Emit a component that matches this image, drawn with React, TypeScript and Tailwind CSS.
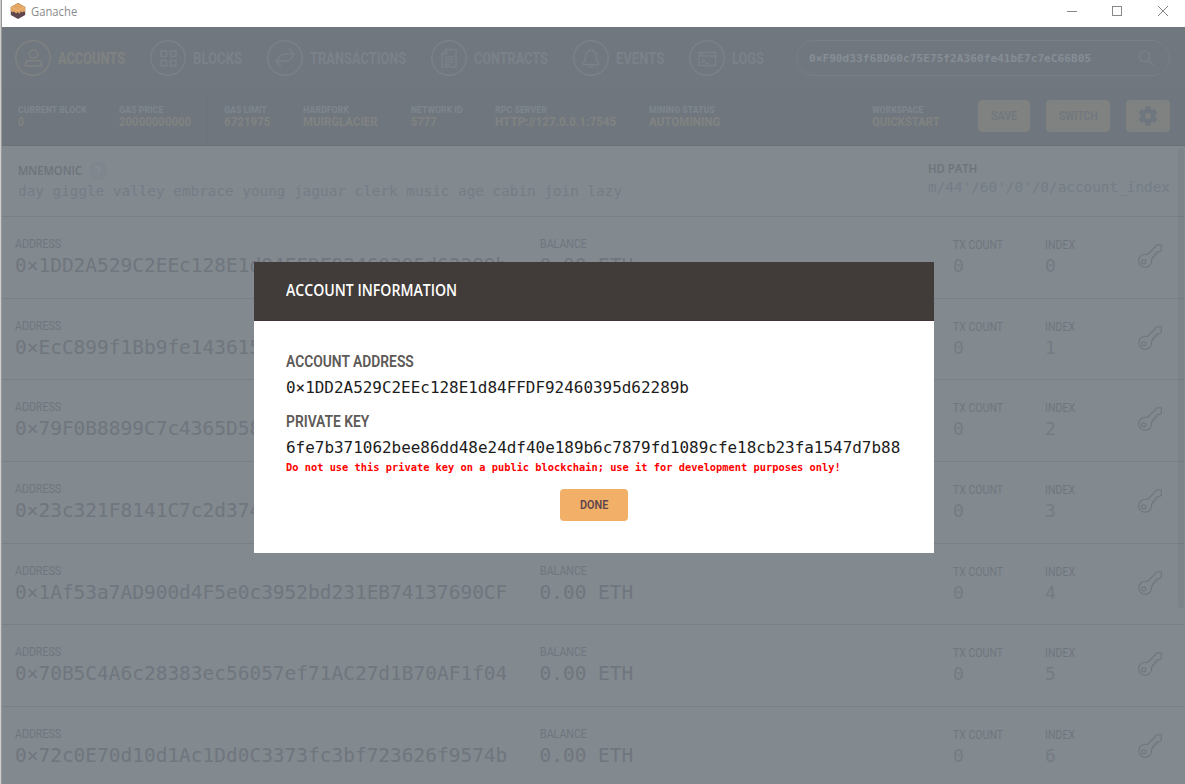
import React, { useLayoutEffect, useRef } from 'react';

const SANS = "font-['Roboto','Liberation_Sans',sans-serif]";
const MONO = "font-['DejaVu_Sans_Mono','Liberation_Mono',monospace]";

// Condenses a single line of text so that it fills the width of its box
const Fit: React.FC<{ className: string; children: string }> = ({ className, children }) => {
  const ref = useRef<HTMLSpanElement>(null);

  useLayoutEffect(() => {
    const el = ref.current;
    if (!el || !el.parentElement) return;
    el.style.transform = `scaleX(${el.parentElement.clientWidth / el.offsetWidth})`;
  }, []);

  return (
    <div className={`shrink-0 whitespace-nowrap ${className}`}>
      <span ref={ref} className="inline-block origin-left">{children}</span>
    </div>
  );
};

const navItems = [
  {
    label: 'ACCOUNTS',
    width: 'w-[67px]',
    color: 'text-[#7f8280]',
    icon: (
      <>
        <circle cx="18.5" cy="14" r="4.3" />
        <path d="M10.5 26v-2c0-2 1.5-3.3 4-3.3h8c2.5 0 4 1.3 4 3.3v2z" />
      </>
    ),
  },
  {
    label: 'BLOCKS',
    width: 'w-[49px]',
    color: 'text-[#7a8189]',
    icon: <path d="M11 11h5.5v5.5H11zM20.5 11H26v5.5h-5.5zM11 20.5h5.5V26H11zM20.5 20.5H26V26h-5.5z" />,
  },
  {
    label: 'TRANSACTIONS',
    width: 'w-[96px]',
    color: 'text-[#7a8189]',
    icon: <path d="M21.7 8L27 14l-4 6.5M27 14H15.500L9 21h13.500M9 21l5 6" />,
  },
  {
    label: 'CONTRACTS',
    width: 'w-[74px]',
    color: 'text-[#7a8189]',
    icon: (
      <>
        <path d="M15.5 9.5H25V27H11V14z" />
        <path d="M15.5 9.5V14H11M13.5 17h9M13.5 19.5h9M13.5 22h9M13.5 24.5h6" />
      </>
    ),
  },
  {
    label: 'EVENTS',
    width: 'w-[48px]',
    color: 'text-[#7a8189]',
    icon: (
      <>
        <path d="M11 24.5c-1.2 0-1.2-1.2-.4-2 1.7-1.6 1.9-3 1.9-5.5 0-3.2 1.3-5 3.7-5.7.3-2.4 3.3-2.4 3.6 0 2.4.7 3.7 2.5 3.7 5.7 0 2.5.2 3.9 1.9 5.5.8.8.8 2-.4 2z" />
        <path d="M15.8 25c.3 2.7 4.1 2.7 4.4 0" />
      </>
    ),
  },
  {
    label: 'LOGS',
    width: 'w-[32px]',
    color: 'text-[#7a8189]',
    icon: <path d="M10 12.5h16.5v13H10zM10 16h16.5M13 12.5V16M12.5 18.5l3 2.2-3 2.2M16 23.3h4" />,
  },
];

const statusItems = [
  { label: 'CURRENT BLOCK', value: '0', cell: 'w-[101px] border-[#6d747c]', lw: 'w-[69px]', vw: 'w-[6px]' },
  { label: 'GAS PRICE', value: '20000000000', cell: 'w-[105px] border-[#6d747c]', lw: 'w-[44px]', vw: 'w-[72px]' },
  { label: 'GAS LIMIT', value: '6721975', cell: 'w-[79px] border-[#6d747c]', lw: 'w-[43px]', vw: 'w-[46px]' },
  { label: 'HARDFORK', value: 'MUIRGLACIER', cell: 'w-[107.5px] border-[#6d747c]', lw: 'w-[46px]', vw: 'w-[75px]' },
  { label: 'NETWORK ID', value: '5777', cell: 'w-[84.5px] border-transparent', lw: 'w-[52px]', vw: 'w-[26px]' },
  { label: 'RPC SERVER', value: 'HTTP://127.0.0.1:7545', cell: 'w-[154px] border-transparent', lw: 'w-[52px]', vw: 'w-[121px]' },
  { label: 'MINING STATUS', value: 'AUTOMINING', cell: 'w-[222px] border-transparent', lw: 'w-[66px]', vw: 'w-[71px]' },
];

const accounts = [
  '0×1DD2A529C2EEc128E1d84FFDF92460395d62289b',
  '0×EcC899f1Bb9fe143615',
  '0×79F0B8899C7c4365D58',
  '0×23c321F8141C7c2d374',
  '0×1Af53a7AD900d4F5e0c3952bd231EB74137690CF',
  '0×70B5C4A6c28383ec56057ef71AC27d1B70AF1f04',
  '0×72c0E70d10d1Ac1Dd0C3373fc3bf723626f9574b',
];

const Logo = () => (
  <svg className="h-4 w-4" viewBox="0 0 16 16">
    <path d="M8 0l7.2 4v8L8 16 .8 12V4z" fill="#5e464d" />
    <path d="M8 0l7.2 4v5l-1.5-.5-1.5 1-1.5-1L9.5 11 8 9l-2 1.5L4 8.5l-1.5.8L.8 8V4z" fill="#e4a663" />
    <path d="M2 4.3l6 3.2 6-3.2" fill="none" stroke="#f3c48e" strokeWidth=".6" />
  </svg>
);

const TitleBar = () => (
  <div className="flex h-[27px] shrink-0 items-start bg-white pl-2">
    <div className="mt-[3px]"><Logo /></div>
    <Fit className="ml-[5px] mt-[3px] w-[46px] font-['Open_Sans','Noto_Sans',sans-serif] text-xs leading-[17px] text-[#8c8c8c]">Ganache</Fit>
    <svg className="ml-auto mr-[15px] mt-[5px]" width="104" height="12" viewBox="0 0 104 12" fill="none" stroke="#888">
      <path d="M1 6.5h10" shapeRendering="crispEdges" />
      <path d="M46.5 1.5h9v9h-9z" shapeRendering="crispEdges" />
      <path d="M92 1l10 10M102 1L92 11" />
    </svg>
  </div>
);

const NavBar = () => (
  <div className="flex h-[62px] items-center border-b border-[#6e757d] pl-[13px] pr-[15px]">
    <div className="flex gap-[25px]">
      {navItems.map((item) => (
        <div key={item.label} className={`flex items-center gap-[7px] ${item.color}`}>
          <svg className="h-9 w-9 shrink-0" viewBox="0 0 36 36" fill="none" stroke="currentColor" strokeWidth="1.5">
            <circle cx="18" cy="18" r="17.2" />
            {item.icon}
          </svg>
          <Fit className={`pt-0.5 text-base font-extrabold leading-5 ${item.width}`}>{item.label}</Fit>
        </div>
      ))}
    </div>
    <div className="ml-auto flex h-9 w-[374px] items-center justify-between rounded-full border border-[#788087] pl-3 pr-[15px]">
      <Fit className={`w-[282px] pt-0.5 text-[11px] font-bold leading-4 text-[#868e96] ${MONO}`}>
        0×F90d33f68D60c75E75f2A360fe41bE7c7eC66B05
      </Fit>
      <svg className="h-4 w-4" viewBox="0 0 16 16" fill="none" stroke="#798188" strokeWidth="1.6">
        <circle cx="6.5" cy="6.5" r="5.3" />
        <path d="M10.5 10.5l5 4.5" />
      </svg>
    </div>
  </div>
);

const StatusBar = () => (
  <div className="flex h-[57px] border-b border-[#697179] bg-[#6f767e]">
    {statusItems.map((item) => (
      <div key={item.label} className={`shrink-0 border-r pl-4 pt-4 ${item.cell}`}>
        <Fit className={`text-[9px] font-extrabold leading-[11px] text-[#7d858d] ${item.lw}`}>{item.label}</Fit>
        <Fit className={`text-xs font-extrabold leading-[13px] text-[#7f8280] ${item.vw}`}>{item.value}</Fit>
      </div>
    ))}
    <div className="ml-auto flex pr-[15px] pt-[11px]">
      <div className="w-[106px] pt-[5px]">
        <Fit className="w-[51px] text-[9px] font-extrabold leading-[11px] text-[#7d858d]">WORKSPACE</Fit>
        <Fit className="w-[68px] text-xs font-extrabold leading-[13px] text-[#7f8280]">QUICKSTART</Fit>
      </div>
      <div className="flex gap-4 text-xs font-medium text-[#70777e]">
        <button className="flex h-8 w-[52px] items-center justify-center rounded-sm bg-[#7f8280]"><Fit className="w-[26px] text-left">SAVE</Fit></button>
        <button className="flex h-8 w-16 items-center justify-center rounded-sm bg-[#7f8280]"><Fit className="w-[39px] text-left">SWITCH</Fit></button>
        <button className="flex h-8 w-11 items-center justify-center rounded-sm bg-[#7f8280]">
          <svg className="h-[22px] w-[22px]" viewBox="0 0 24 24" fill="#6e767e" stroke="#6e767e" strokeWidth=".6" strokeLinejoin="round">
            <path d="M19.43 12.98c.04-.32.07-.64.07-.98s-.03-.66-.07-.98l2.11-1.65c.19-.15.24-.42.12-.64l-2-3.46c-.12-.22-.39-.3-.61-.22l-2.49 1c-.52-.4-1.08-.73-1.69-.98l-.38-2.65C14.46 2.18 14.25 2 14 2h-4c-.25 0-.46.18-.49.42l-.38 2.65c-.61.25-1.17.59-1.69.98l-2.49-1c-.23-.09-.49 0-.61.22l-2 3.46c-.13.22-.07.49.12.64l2.11 1.65c-.04.32-.07.65-.07.98s.03.66.07.98l-2.11 1.65c-.19.15-.24.42-.12.64l2 3.46c.12.22.39.3.61.22l2.49-1c.52.4 1.08.73 1.69.98l.38 2.65c.03.24.24.42.49.42h4c.25 0 .46-.18.49-.42l.38-2.65c.61-.25 1.17-.59 1.69-.98l2.49 1c.23.09.49 0 .61-.22l2-3.46c.12-.22.07-.49-.12-.64zM12 15.5a3.5 3.5 0 1 1 0-7 3.5 3.5 0 0 1 0 7z" />
          </svg>
        </button>
      </div>
    </div>
  </div>
);

const MnemonicPanel = () => (
  <div className="flex h-[71px] shrink-0 justify-between border-b border-[#787f86] pl-4 pr-[15px]">
    <div className="pt-4">
      <div className="flex h-[18px] items-start gap-2">
        <Fit className="w-16 font-['Open_Sans',sans-serif] text-[13px] font-semibold leading-4 text-[#6d747b]">MNEMONIC</Fit>
        <span className="flex h-[18px] w-4 items-center justify-center rounded-md bg-[#7f868d] text-xs font-bold text-[#858c94]">?</span>
      </div>
      <Fit className={`w-[604px] text-[14px] leading-[22px] text-[#747d86] ${MONO}`}>
        day giggle valley embrace young jaguar clerk music age cabin join lazy
      </Fit>
    </div>
    <div className="pt-[13px]">
      <Fit className="w-[49px] font-['Open_Sans',sans-serif] text-[13px] font-semibold leading-[18px] text-[#6d747b]">HD PATH</Fit>
      <Fit className={`w-[242px] text-[14px] leading-5 text-[#747d86] ${MONO}`}>{"m/44'/60'/0'/0/account_index"}</Fit>
    </div>
  </div>
);

const AccountRow: React.FC<{ address: string; index: number }> = ({ address, index }) => (
  <div className="flex h-[81.67px] shrink-0 border-b border-[#787f86] pl-[13px] pt-5 text-[#70767e]">
    <div className="w-[524.5px]">
      <Fit className="w-[46px] text-xs leading-[15px]">ADDRESS</Fit>
      <div className={`text-[19.48px] leading-7 ${MONO}`}>{address}</div>
    </div>
    <div className="w-[413.5px]">
      <Fit className="w-[47px] text-xs leading-[15px]">BALANCE</Fit>
      <div className={`text-[19.48px] leading-7 ${MONO}`}>0.00 ETH</div>
    </div>
    <div className="w-[92px] pt-px">
      <Fit className="w-[50px] text-xs leading-[15px]">TX COUNT</Fit>
      <div className={`text-[18px] leading-[26px] text-[#747b82] ${MONO}`}>0</div>
    </div>
    <div className="w-[93px] pt-px">
      <Fit className="w-[30px] text-xs leading-[15px]">INDEX</Fit>
      <div className={`text-[18px] leading-[26px] text-[#747b82] ${MONO}`}>{index}</div>
    </div>
    <svg className="mt-[7px] h-6 w-6" viewBox="0 0 24 24" fill="none" stroke="currentColor" strokeWidth="1.1" strokeLinejoin="round">
      <path d="M9.5 10.5L19 .8h4.3v5.5l-2 1.5h-2.5V10h-2v2.3h-2v2.5h-1.3c.8 4.9-2 8.4-6.5 8.4-3.5 0-6.4-2.7-6.4-6.2 0-4.5 4-7.5 8.9-6.5z" />
      <circle cx="5.7" cy="17.8" r="2.1" />
    </svg>
  </div>
);

const AccountModal = () => (
  <div className="absolute left-[254px] top-[262px] h-[291px] w-[680px] bg-white">
    <div className="h-[59px] border-b border-[#3f3334] bg-[#413c39] px-8 pt-[18px]">
      <Fit className="w-[171px] font-['Open_Sans',sans-serif] text-base font-semibold leading-5 text-white">ACCOUNT INFORMATION</Fit>
    </div>
    <div className="px-8 pt-[30px]">
      <Fit className="w-[128px] text-base font-semibold leading-[22px] text-[#5d5956]">ACCOUNT ADDRESS</Fit>
      <Fit className={`mt-1 w-[403px] text-[15.5px] leading-[22px] text-[#1c1c1c] ${MONO}`}>
        0×1DD2A529C2EEc128E1d84FFDF92460395d62289b
      </Fit>
      <Fit className="mt-3 w-[83px] text-base font-semibold leading-[22px] text-[#5d5956]">PRIVATE KEY</Fit>
      <Fit className={`mt-1 w-[614px] text-[15.5px] leading-[22px] text-[#1c1c1c] ${MONO}`}>
        6fe7b371062bee86dd48e24df40e189b6c7879fd1089cfe18cb23fa1547d7b88
      </Fit>
      <Fit className={`w-[555px] text-[10.4px] font-bold leading-[17px] text-[#ff0000] ${MONO}`}>
        Do not use this private key on a public blockchain; use it for development purposes only!
      </Fit>
      <button className="mx-auto mt-[13px] flex h-8 w-[68px] items-center justify-center rounded-sm bg-[#f2af67] text-xs font-semibold text-[#5e464d]">
        <Fit className="w-7 text-left">DONE</Fit>
      </button>
    </div>
  </div>
);

const App: React.FC = () => {
  return (
    <div className={`relative flex h-[784px] w-[1185px] overflow-hidden ${SANS}`}>
      <div className="w-0.5 shrink-0 border-r border-[#999] bg-[#ccc]"></div>
      <div className="flex w-[1183px] flex-col">
        <TitleBar />
        <div className="h-[119px] shrink-0 bg-[#70777f]">
          <NavBar />
          <StatusBar />
        </div>
        <div className="relative flex min-h-0 flex-1 flex-col overflow-hidden bg-[#82898f]">
          <MnemonicPanel />
          {accounts.map((address, index) => (
            <AccountRow key={address} address={address} index={index} />
          ))}
          {/* Scrollbar thumb */}
          <div className="absolute right-px top-0.5 h-[460px] w-1.5 rounded-full bg-[#5e656c]/15"></div>
        </div>
      </div>
      <AccountModal />
    </div>
  );
};

export default App;
